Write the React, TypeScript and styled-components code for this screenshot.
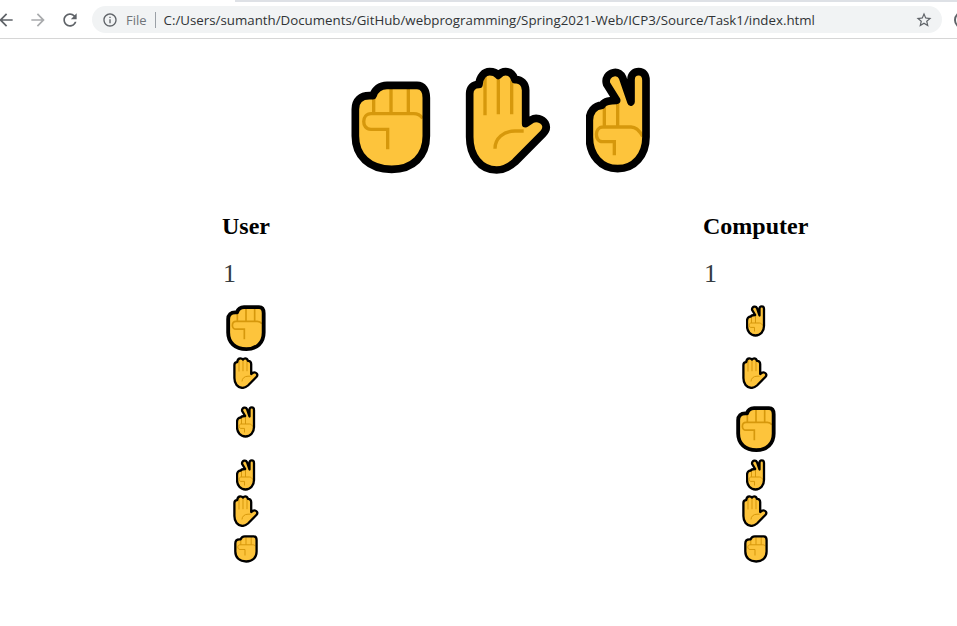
import React from 'react';
import styled, {createGlobalStyle} from 'styled-components';

const GlobalStyle = createGlobalStyle`
  html, body {
    margin: 0;
    padding: 0;
    height: 100%;
    overflow: hidden;
    background: #fff;
    font-family: "Liberation Serif", serif;
  }
`

const Toolbar = styled.div`
  position: relative;
  display: flex;
  align-items: center;
  height: 37px;
  padding-top: 1px;
  background: #fff;
  border-bottom: 1px solid #d6d6d6;
  overflow: hidden;

  &::before {
    content: "";
    position: absolute;
    top: 0;
    left: 235px;
    right: 0;
    height: 2px;
    background: #dee1e6;
  }
`
const NavButton = styled.svg<{$dim?: boolean; $ml: number}>`
  flex: none;
  width: 20px;
  height: 20px;
  margin-left: ${p => p.$ml}px;
  fill: ${p => (p.$dim ? '#a9abad' : '#5f6368')};
`
const Omnibox = styled.div`
  flex: none;
  display: flex;
  align-items: center;
  width: 850px;
  height: 27px;
  margin-left: 12px;
  padding-left: 10px;
  box-sizing: border-box;
  border-radius: 14px;
  background: #f1f3f4;
  font-family: "Open Sans", sans-serif;
  font-size: 13.3px;
`
const InfoIcon = styled.svg`
  flex: none;
  width: 16px;
  height: 16px;
  fill: #5f6368;
`
const Scheme = styled.span`
  margin-left: 8px;
  padding-right: 8px;
  border-right: 1px solid #9aa0a6;
  color: #70757a;
  font-size: 13px;
  line-height: 16px;
`
const Url = styled.span`
  flex: 1;
  margin-left: 8px;
  color: #303336;
  white-space: nowrap;
`
const StarIcon = styled.svg`
  flex: none;
  width: 18px;
  height: 18px;
  margin-right: 9px;
  fill: #5f6368;
`
const ProfileEdge = styled.div`
  flex: none;
  width: 14px;
  height: 14px;
  margin-left: 12px;
  border: 2px solid #5f6368;
  border-radius: 50%;
`

const Picker = styled.div`
  display: flex;
  align-items: flex-end;
  height: 136px;
  padding-left: 351px;
  gap: 33.5px;
`
const Board = styled.div`
  display: flex;
  align-items: flex-start;
  padding: 36px 0 0 222px;
  gap: 433px;
`
const Player = styled.section`
  display: flex;
  flex-direction: column;
`
const Name = styled.h2`
  margin: 0;
  height: 30px;
  font-size: 24px;
  line-height: 30px;
  font-weight: 700;
  color: #000;
`
const Score = styled.p`
  margin: 18px 0 0 1px;
  height: 30px;
  font-size: 26px;
  line-height: 30px;
  color: #343a40;
`
const Rounds = styled.div`
  margin-top: 16px;
`
const Round = styled.div<{$h: number}>`
  display: flex;
  justify-content: center;
  align-items: flex-start;
  height: ${p => p.$h}px;
`
const Hand = styled.svg<{$w: number; $h: number}>`
  display: block;
  flex: none;
  width: ${p => p.$w}px;
  height: ${p => p.$h}px;
`

type Kind = 'rock' | 'paper' | 'scissors';

const skin = '#fdc43c';
const crease = '#d6980c';

// viewBox is 3x the icon's size on the page
const shapes: Record<Kind, {w: number; h: number; outline: string; lines: string}> = {
  rock: {
    w: 80,
    h: 94,
    outline: 'M13 165V85C13 58 30 44 55 44H66C72 25 87 13 108 13H198C216 13 226 28 226 50V165C226 225 186 265 122 265C55 265 13 225 13 165Z',
    lines: 'M68 50V98M120 20V98M172 20V98M215 112C208 102 198 98 188 98H60C32 98 30 145 60 145H110V205',
  },
  paper: {
    w: 88,
    h: 108,
    outline: 'M14 210V80C14 62 25 52 42 52C44 28 58 14 74 14C88 14 96 20 100 25C106 18 114 14 122 14C138 14 146 26 150 38C168 36 182 50 182 70V170L200 158C212 150 232 155 240 168C248 182 242 192 234 200L150 285C130 303 110 309 95 309C45 309 14 265 14 210Z',
    lines: 'M60 30V145M100 25V142M140 40V142M90 245C90 215 115 192 150 192H176',
  },
  scissors: {
    w: 66,
    h: 108,
    outline: 'M10 210V160C10 135 25 115 48 115C52 105 65 100 92 100L62 52C56 34 68 20 82 17C96 14 106 22 110 32L135 105V38C135 22 145 14 158 14C172 14 180 24 180 40V210C180 265 145 305 95 305C45 305 10 265 10 210Z',
    lines: 'M55 120V180M95 105V180M170 208C160 190 148 180 135 180H50C26 180 24 224 50 224H85V265',
  },
};

const HandIcon: React.FC<{kind: Kind; size: number}> = ({kind, size}) => {
  const s = shapes[kind];
  return (
    <Hand $w={s.w * size} $h={s.h * size} viewBox={`0 0 ${s.w * 3} ${s.h * 3}`}>
      <path d={s.outline} fill={skin}/>
      <path d={s.lines} fill="none" stroke={crease} strokeWidth={10}/>
      <path d={s.outline} fill="none" stroke="#000" strokeWidth={23} strokeLinejoin="round"/>
    </Hand>
  );
};

const small = 0.3;
const rowHeights = [52, 49, 53, 36, 40, 30];

const userHands: [Kind, number][] = [
  ['rock', 0.5],
  ['paper', small],
  ['scissors', small],
  ['scissors', small],
  ['paper', small],
  ['rock', small],
];
const computerHands: [Kind, number][] = [
  ['scissors', small],
  ['paper', small],
  ['rock', 0.5],
  ['scissors', small],
  ['paper', small],
  ['rock', small],
];

const PlayerColumn: React.FC<{name: string; score: number; hands: [Kind, number][]}> = ({name, score, hands}) => (
  <Player>
    <Name>{name}</Name>
    <Score>{score}</Score>
    <Rounds>
      {hands.map(([kind, size], i) => (
        <Round key={i} $h={rowHeights[i]}>
          <HandIcon kind={kind} size={size}/>
        </Round>
      ))}
    </Rounds>
  </Player>
);

function App() {
  return (
    <>
      <GlobalStyle/>
      <Toolbar>
        <NavButton $ml={-4} viewBox="0 0 24 24"><path d="M20 11H7.83l5.59-5.59L12 4l-8 8 8 8 1.41-1.41L7.83 13H20v-2z"/></NavButton>
        <NavButton $ml={12} $dim viewBox="0 0 24 24"><path d="M4 11h12.17l-5.59-5.59L12 4l8 8-8 8-1.41-1.41L16.17 13H4v-2z"/></NavButton>
        <NavButton $ml={12} viewBox="0 0 24 24"><path d="M17.65 6.35C16.2 4.9 14.21 4 12 4c-4.42 0-7.99 3.58-7.99 8s3.57 8 7.99 8c3.73 0 6.84-2.55 7.73-6h-2.08c-.82 2.33-3.04 4-5.65 4-3.31 0-6-2.69-6-6s2.69-6 6-6c1.66 0 3.14.69 4.22 1.78L13 11h7V4l-2.35 2.35z"/></NavButton>
        <Omnibox>
          <InfoIcon viewBox="0 0 24 24"><path d="M11 7h2v2h-2zm0 4h2v6h-2zm1-9C6.48 2 2 6.48 2 12s4.48 10 10 10 10-4.48 10-10S17.52 2 12 2zm0 18c-4.41 0-8-3.59-8-8s3.59-8 8-8 8 3.59 8 8-3.59 8-8 8z"/></InfoIcon>
          <Scheme>File</Scheme>
          <Url>C:/Users/sumanth/Documents/GitHub/webprogramming/Spring2021-Web/ICP3/Source/Task1/index.html</Url>
          <StarIcon viewBox="0 0 24 24"><path d="M22 9.24l-7.19-.62L12 2 9.19 8.63 2 9.24l5.46 4.73L5.82 21 12 17.27 18.18 21l-1.63-7.03L22 9.24zM12 15.4l-3.76 2.27 1-4.28-3.32-2.88 4.38-.38L12 6.1l1.71 4.04 4.38.38-3.32 2.88 1 4.28L12 15.4z"/></StarIcon>
        </Omnibox>
        <ProfileEdge/>
      </Toolbar>
      <Picker>
        <HandIcon kind="rock" size={1}/>
        <HandIcon kind="paper" size={1}/>
        <HandIcon kind="scissors" size={1}/>
      </Picker>
      <Board>
        <PlayerColumn name="User" score={1} hands={userHands}/>
        <PlayerColumn name="Computer" score={1} hands={computerHands}/>
      </Board>
    </>
  );
}

export default App;
